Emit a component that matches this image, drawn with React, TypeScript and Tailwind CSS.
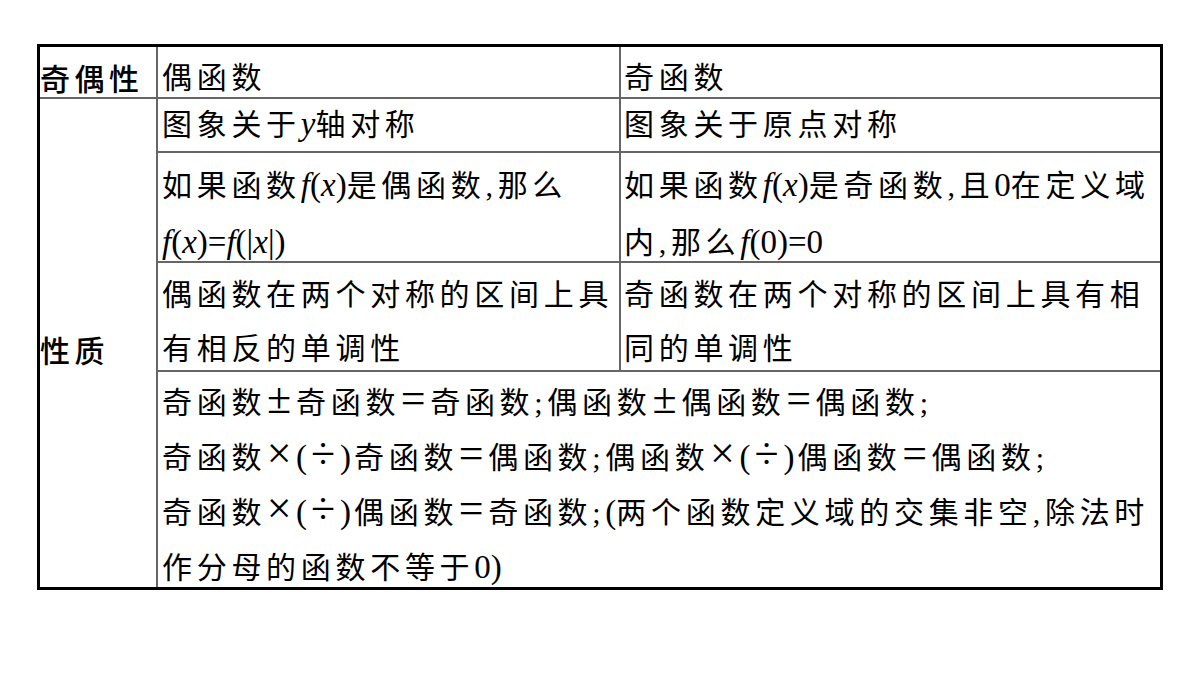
import React from "react";

const M = ({ children }: { children: React.ReactNode }) => (
  <span className="tracking-normal text-[33px]">{children}</span>
);

const Op = ({ c, w }: { c: string; w: string }) => (
  <span className={`inline-block text-center tracking-normal text-[44px] leading-none mr-[4px] ${w}`}>{c}</span>
);

const PM = () => <Op c="±" w="w-[26px]" />;
const EQ = () => <Op c="=" w="w-[26px]" />;
const TIMES = () => <Op c="×" w="w-[26px]" />;
const DIV = () => <Op c="÷" w="w-[26px]" />;
const LP = () => <span className="inline-block w-[14px] tracking-normal text-[33px] leading-none">(</span>;
const RP = () => <span className="inline-block w-[14px] tracking-normal text-[33px] leading-none">)</span>;

export default function App() {
  const line = "border-[#666666]";
  return (
    <div className="w-[1200px] h-[675px] bg-white pt-[44px] pl-[37px] text-black">
      <div className="w-[1126px] border-[3px] border-black grid grid-cols-[118px_463px_1fr] grid-rows-[52px_54px_110px_109px_215px] text-[30px] tracking-[4.7px] whitespace-nowrap font-['Liberation_Serif','Noto_Sans_CJK_SC',serif]">
        {/* header */}
        <div className={`border-r-2 border-b-2 ${line} pt-[3px] leading-[55px] font-['Noto_Sans_CJK_SC',sans-serif] font-medium tracking-[4.5px]`}>
          奇偶性
        </div>
        <div className={`border-r-2 border-b-2 ${line} pl-[4px] pt-[3px] leading-[55px]`}>偶函数</div>
        <div className={`border-b-2 ${line} pl-[3px] pt-[3px] leading-[55px]`}>奇函数</div>

        {/* 性质 */}
        <div className={`row-span-4 border-r-2 ${line} flex items-center pt-[12px] font-['Noto_Sans_CJK_SC',sans-serif] font-medium tracking-[4.5px]`}>
          性质
        </div>

        {/* row 1 */}
        <div className={`border-r-2 border-b-2 ${line} pl-[4px] leading-[51px]`}>
          图象关于<M><i>y</i></M>轴对称
        </div>
        <div className={`border-b-2 ${line} pl-[3px] leading-[51px]`}>图象关于原点对称</div>

        {/* row 2 */}
        <div className={`border-r-2 border-b-2 ${line} pl-[4px] pt-[4px] leading-[57px]`}>
          如果函数<M><i>f</i>(<i>x</i>)</M>是偶函数,那么
          <br />
          <M>
            <i>f</i>(<i>x</i>)=<i>f</i>(|<i>x</i>|)
          </M>
        </div>
        <div className={`border-b-2 ${line} pl-[3px] pt-[4px] leading-[57px]`}>
          如果函数<M><i>f</i>(<i>x</i>)</M>是奇函数,且<M>0</M>在定义域
          <br />
          内,那么<M><i>f</i>(0)=0</M>
        </div>

        {/* row 3 */}
        <div className={`border-r-2 border-b-2 ${line} pl-[4px] pt-[5px] leading-[54px]`}>
          偶函数在两个对称的区间上具
          <br />
          有相反的单调性
        </div>
        <div className={`border-b-2 ${line} pl-[3px] pt-[5px] leading-[54px]`}>
          奇函数在两个对称的区间上具有相
          <br />
          同的单调性
        </div>

        {/* row 4 */}
        <div className="col-span-2 pl-[4px] pt-[3px] leading-[55px]">
          奇函数<PM />奇函数<EQ />奇函数;偶函数<PM />偶函数<EQ />偶函数;
          <br />
          奇函数<TIMES /><LP /><DIV /><RP />奇函数<EQ />偶函数;偶函数<TIMES /><LP /><DIV /><RP />偶函数<EQ />偶函数;
          <br />
          奇函数<TIMES /><LP /><DIV /><RP />偶函数<EQ />奇函数;<M>(</M>两个函数定义域的交集非空,除法时
          <br />
          作分母的函数不等于<M>0)</M>
        </div>
      </div>
    </div>
  );
}
